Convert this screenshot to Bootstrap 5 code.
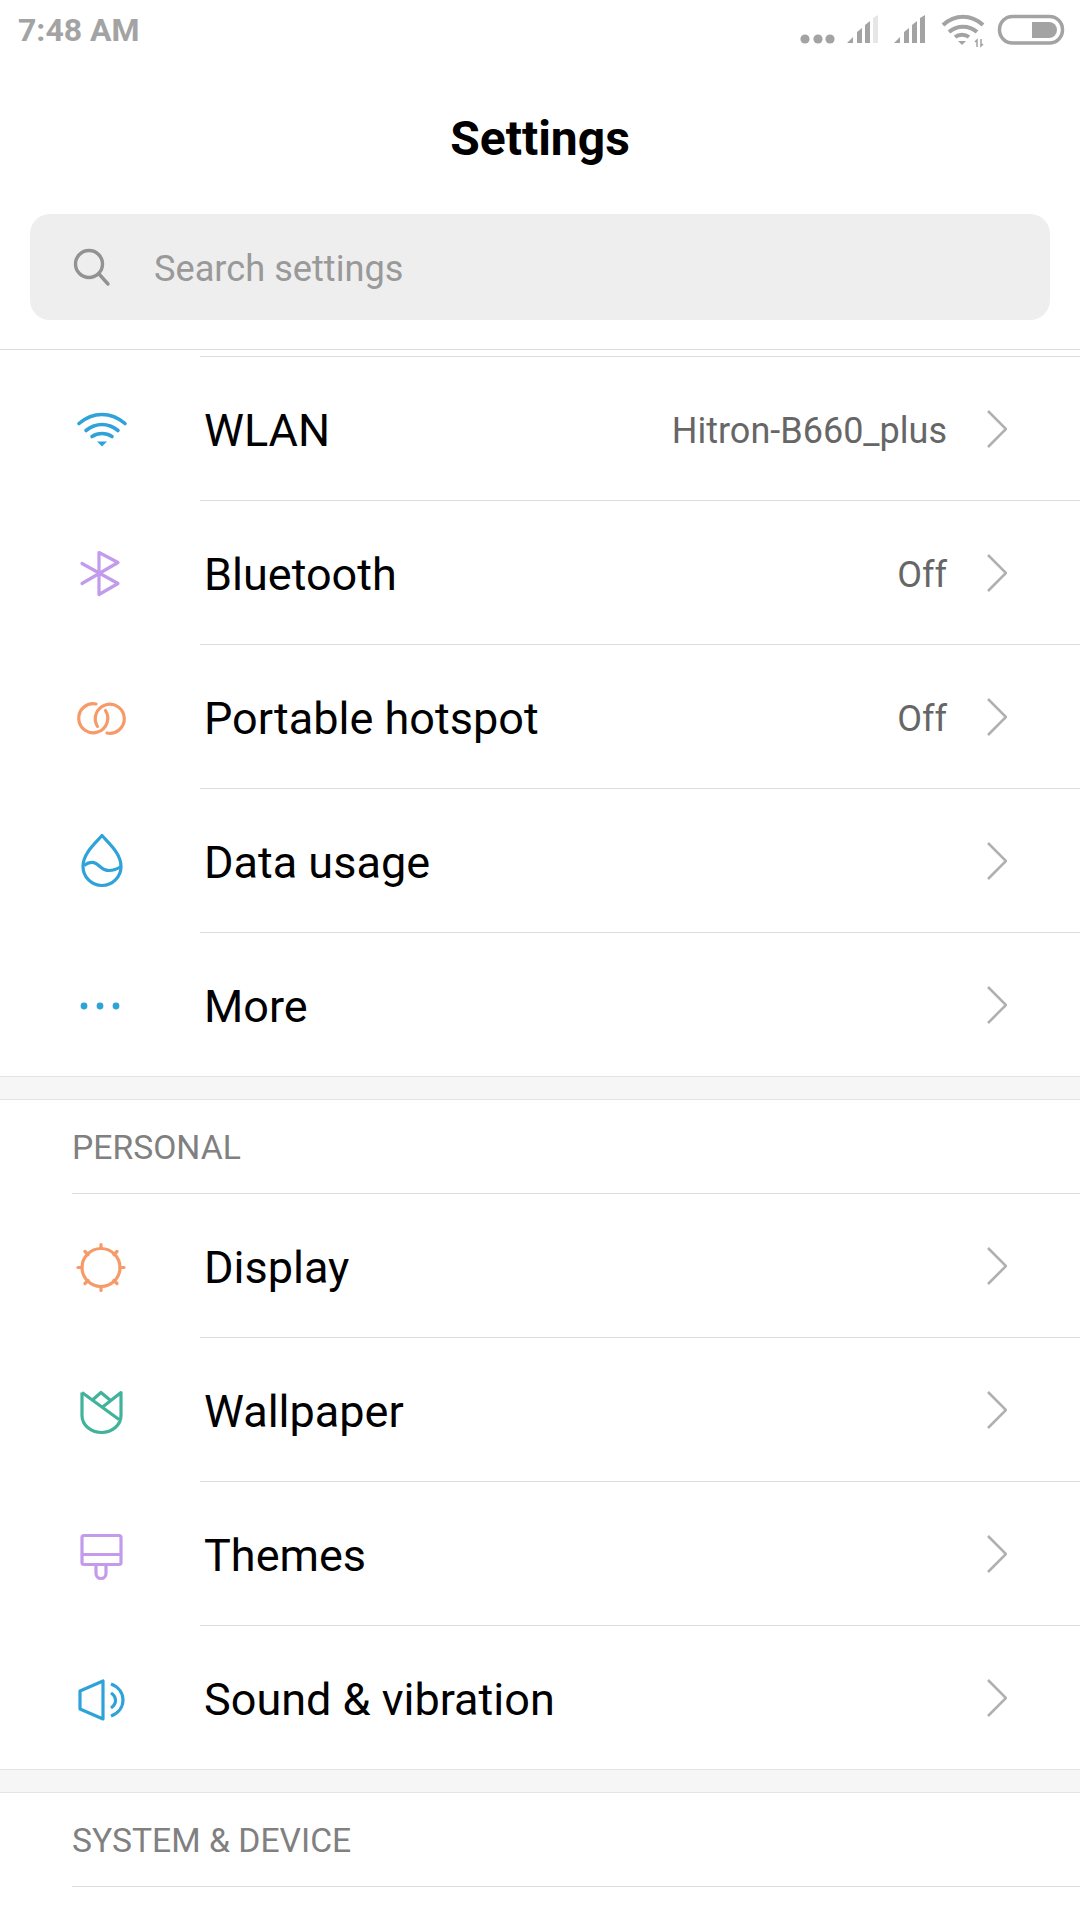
<!DOCTYPE html>
<html lang="en">
  <head>
    <meta charset="UTF-8" />
    <meta name="viewport" content="width=device-width, initial-scale=1.0" />
    <title>Settings</title>
    <link
      href="https://cdn.jsdelivr.net/npm/bootstrap@5.3.2/dist/css/bootstrap.min.css"
      rel="stylesheet"
    />
    <style>
      body {
        font-family: Roboto, "Liberation Sans", sans-serif;
        background: #fff;
        color: #000;
        width: 1080px;
        height: 1920px;
        overflow: hidden;
      }
      svg {
        display: block;
        flex: none;
      }
      .phone-status {
        height: 60px;
        padding: 0 14px 0 18px;
      }
      .phone-time {
        font-size: 32px;
        font-weight: 700;
        color: #a3a3a3;
      }
      .page-title {
        height: 154px;
        padding-top: 4px;
        font-size: 48px;
        font-weight: 700;
        line-height: 1;
        margin: 0;
      }
      .search-box {
        height: 106px;
        margin: 0 30px 29px;
        background: #eee;
        border-radius: 20px;
        font-size: 36.2px;
        color: #999;
      }
      .search-box span {
        padding-top: 4px;
      }
      .search-icon {
        margin: 0 42px 0 42px;
      }
      .head-block {
        border-bottom: 1px solid #ddd;
      }
      .top-gap {
        height: 7px;
        margin-left: 200px;
        border-bottom: 1px solid #ddd;
      }
      .set-row {
        height: 144px;
        background: transparent;
        color: #000;
      }
      .row-icon {
        width: 200px;
        padding-left: 72px;
      }
      .row-body {
        height: 100%;
        border-bottom: 1px solid #ddd;
        padding-right: 73px;
      }
      .set-row:last-child {
        height: 143px;
      }
      .set-row:last-child .row-body {
        border-bottom: 0;
      }
      .row-name {
        font-size: 45px;
        padding: 5px 0 0 4px;
      }
      .row-value {
        font-size: 36px;
        color: #666;
        margin-right: 40px;
        padding-top: 5px;
      }
      .group-gap {
        height: 24px;
        background: #f6f6f6;
        border-top: 1px solid #e4e4e4;
        border-bottom: 1px solid #e4e4e4;
      }
      .group-head {
        height: 94px;
        margin-left: 72px;
        padding-top: 4px;
        border-bottom: 1px solid #ddd;
        font-size: 33.7px;
        color: #808080;
      }
    </style>
  </head>
  <body>
    <!-- Header -->
    <div class="head-block">
      <div class="phone-status d-flex align-items-center justify-content-between">
        <span class="phone-time">7:48 AM</span>
        <div class="d-flex align-items-center">
          <svg width="44" height="40" viewBox="796 10 44 40" fill="#a3a3a3">
            <circle cx="805" cy="39" r="4.6" />
            <circle cx="818" cy="39" r="4.6" />
            <circle cx="830" cy="39" r="4.6" />
          </svg>
          <svg width="52" height="40" viewBox="840 10 52 40" fill="#a3a3a3">
            <path d="M847 43l6-6v6zM857 43V32l5-4v15zM865 43V25l5-4v22z" />
            <path d="M873 43V18l5-3v28z" fill="#e6e6e6" />
          </svg>
          <svg width="48" height="40" viewBox="892 10 48 40" fill="#a3a3a3">
            <path d="M894 43l6-6v6zM904 43V32l5-4v15zM912 43V25l5-4v22zM920 43V18l5-3v28z" />
          </svg>
          <svg width="54" height="40" viewBox="940 10 54 40" fill="none" stroke="#a3a3a3" stroke-width="4">
            <path d="M943 25c12-11 28-11 40 0M949 32c8-7 20-7 28 0" />
            <path d="M955 37c4-3 10-3 14 0" />
            <path d="M958 41h8l-4 4z" fill="#a3a3a3" stroke="none" />
            <path d="M977 47v-7l-2 2M981 39v7l2-2" stroke-width="1.5" />
          </svg>
          <svg width="72" height="40" viewBox="994 10 72 40">
            <rect x="999.5" y="16.5" width="63" height="26.5" rx="13" fill="none" stroke="#a3a3a3" stroke-width="3.5" />
            <path d="M1032 22h17a8 8 0 0 1 8 8a8 8 0 0 1-8 8h-17z" fill="#a3a3a3" />
          </svg>
        </div>
      </div>
      <h1 class="page-title d-flex align-items-center justify-content-center">Settings</h1>
      <div class="search-box d-flex align-items-center">
        <svg class="search-icon" width="40" height="40" viewBox="72 248 40 40" fill="none" stroke="#929292" stroke-width="3.4" stroke-linecap="round">
          <circle cx="89" cy="265" r="13.5" />
          <path d="M99 275l9 10" />
        </svg>
        <span>Search settings</span>
      </div>
    </div>
    <!-- End Header -->

    <!-- Network -->
    <div class="top-gap"></div>
    <div class="list-group list-group-flush">
      <div class="set-row list-group-item p-0 border-0 d-flex align-items-center">
        <div class="row-icon">
          <svg width="60" height="60" viewBox="72 398.5 60 60" fill="none" stroke="#2fa3d9" stroke-width="3.6" stroke-linecap="round">
            <path d="M79 423c14-12 32-12 46 0M86 430c10-8 22-8 32 0M92 436c6-4 14-4 20 0" />
            <path d="M97 441h10l-5 5z" fill="#2fa3d9" stroke="none" />
          </svg>
        </div>
        <div class="row-body flex-grow-1 d-flex align-items-center">
          <span class="row-name me-auto">WLAN</span>
          <span class="row-value">Hitron-B660_plus</span>
          <svg width="20" height="38" viewBox="0 0 20 38" fill="none" stroke="#b0b0b0" stroke-width="2.6"><path d="M1 1l18 18L1 37" /></svg>
        </div>
      </div>
      <div class="set-row list-group-item p-0 border-0 d-flex align-items-center">
        <div class="row-icon">
          <svg width="60" height="60" viewBox="72 542.5 60 60" fill="none" stroke="#c39bec" stroke-width="3.2" stroke-linecap="round" stroke-linejoin="round">
            <path d="M82 563l36 20-19 11V552l19 10-36 21" />
          </svg>
        </div>
        <div class="row-body flex-grow-1 d-flex align-items-center">
          <span class="row-name me-auto">Bluetooth</span>
          <span class="row-value">Off</span>
          <svg width="20" height="38" viewBox="0 0 20 38" fill="none" stroke="#b0b0b0" stroke-width="2.6"><path d="M1 1l18 18L1 37" /></svg>
        </div>
      </div>
      <div class="set-row list-group-item p-0 border-0 d-flex align-items-center">
        <div class="row-icon">
          <svg width="60" height="60" viewBox="72 686.5 60 60" fill="none" stroke="#f59a68" stroke-width="3.2" stroke-linecap="round">
            <path d="M96 703.5A14.5 14.5 0 1 0 105.5 710" />
            <path d="M107 732.5A14.5 14.5 0 1 0 97.5 726" />
          </svg>
        </div>
        <div class="row-body flex-grow-1 d-flex align-items-center">
          <span class="row-name me-auto">Portable hotspot</span>
          <span class="row-value">Off</span>
          <svg width="20" height="38" viewBox="0 0 20 38" fill="none" stroke="#b0b0b0" stroke-width="2.6"><path d="M1 1l18 18L1 37" /></svg>
        </div>
      </div>
      <div class="set-row list-group-item p-0 border-0 d-flex align-items-center">
        <div class="row-icon">
          <svg width="60" height="60" viewBox="72 830.5 60 60" fill="none" stroke="#2fa3d9" stroke-width="3.2" stroke-linejoin="round">
            <path d="M102 835C95 843 83 853 83 866a19 19 0 0 0 38 0C121 853 109 843 102 835z" />
            <path d="M84 865c4-3 8-4 12-2s6 7 13 7c5 0 9-2 12-4" />
          </svg>
        </div>
        <div class="row-body flex-grow-1 d-flex align-items-center">
          <span class="row-name me-auto">Data usage</span>
          <svg width="20" height="38" viewBox="0 0 20 38" fill="none" stroke="#b0b0b0" stroke-width="2.6"><path d="M1 1l18 18L1 37" /></svg>
        </div>
      </div>
      <div class="set-row list-group-item p-0 border-0 d-flex align-items-center">
        <div class="row-icon">
          <svg width="60" height="60" viewBox="72 974 60 60" fill="#2fa3d9">
            <circle cx="84" cy="1005" r="3.4" />
            <circle cx="100" cy="1005" r="3.4" />
            <circle cx="116" cy="1005" r="3.4" />
          </svg>
        </div>
        <div class="row-body flex-grow-1 d-flex align-items-center">
          <span class="row-name me-auto">More</span>
          <svg width="20" height="38" viewBox="0 0 20 38" fill="none" stroke="#b0b0b0" stroke-width="2.6"><path d="M1 1l18 18L1 37" /></svg>
        </div>
      </div>
    </div>
    <div class="group-gap"></div>

    <!-- Personal -->
    <div class="group-head d-flex align-items-center">PERSONAL</div>
    <div class="list-group list-group-flush">
      <div class="set-row list-group-item p-0 border-0 d-flex align-items-center">
        <div class="row-icon">
          <svg width="60" height="60" viewBox="72 1235.5 60 60" fill="none" stroke="#f59a68" stroke-width="3.2" stroke-linecap="round">
            <circle cx="101" cy="1267" r="19" />
            <path d="M101 1244v4M101 1286v4M78 1267h4M120 1267h4M85 1251l3 3M114 1280l3 3M85 1283l3-3M114 1254l3-3" />
          </svg>
        </div>
        <div class="row-body flex-grow-1 d-flex align-items-center">
          <span class="row-name me-auto">Display</span>
          <svg width="20" height="38" viewBox="0 0 20 38" fill="none" stroke="#b0b0b0" stroke-width="2.6"><path d="M1 1l18 18L1 37" /></svg>
        </div>
      </div>
      <div class="set-row list-group-item p-0 border-0 d-flex align-items-center">
        <div class="row-icon">
          <svg width="60" height="60" viewBox="72 1379.5 60 60" fill="none" stroke="#41b39a" stroke-width="3.2" stroke-linejoin="round">
            <path d="M82 1392v23a19.5 17 0 0 0 39 0v-23l-19 15" />
            <path d="M82 1392l37 27M93 1399l8-7 9 7.5" />
          </svg>
        </div>
        <div class="row-body flex-grow-1 d-flex align-items-center">
          <span class="row-name me-auto">Wallpaper</span>
          <svg width="20" height="38" viewBox="0 0 20 38" fill="none" stroke="#b0b0b0" stroke-width="2.6"><path d="M1 1l18 18L1 37" /></svg>
        </div>
      </div>
      <div class="set-row list-group-item p-0 border-0 d-flex align-items-center">
        <div class="row-icon">
          <svg width="60" height="60" viewBox="72 1523.5 60 60" fill="none" stroke="#c39bec" stroke-width="3.2" stroke-linejoin="round">
            <path d="M84 1535h35a2 2 0 0 1 2 2v25a2 2 0 0 1-2 2H84a2 2 0 0 1-2-2v-25a2 2 0 0 1 2-2z" />
            <path d="M82 1554h39M96 1564v9a5 5 0 0 0 10 0v-9" />
          </svg>
        </div>
        <div class="row-body flex-grow-1 d-flex align-items-center">
          <span class="row-name me-auto">Themes</span>
          <svg width="20" height="38" viewBox="0 0 20 38" fill="none" stroke="#b0b0b0" stroke-width="2.6"><path d="M1 1l18 18L1 37" /></svg>
        </div>
      </div>
      <div class="set-row list-group-item p-0 border-0 d-flex align-items-center">
        <div class="row-icon">
          <svg width="60" height="60" viewBox="72 1667 60 60" fill="none" stroke="#2fa3d9" stroke-width="3.2" stroke-linejoin="round">
            <path d="M80 1690l23-10v38l-23-10z" />
            <path d="M111 1692c6 4 6 11 0 15M111 1683c16 6 16 26 0 32" />
          </svg>
        </div>
        <div class="row-body flex-grow-1 d-flex align-items-center">
          <span class="row-name me-auto">Sound &amp; vibration</span>
          <svg width="20" height="38" viewBox="0 0 20 38" fill="none" stroke="#b0b0b0" stroke-width="2.6"><path d="M1 1l18 18L1 37" /></svg>
        </div>
      </div>
    </div>
    <div class="group-gap"></div>

    <!-- System -->
    <div class="group-head d-flex align-items-center">SYSTEM &amp; DEVICE</div>

    <script src="https://cdn.jsdelivr.net/npm/bootstrap@5.3.2/dist/js/bootstrap.bundle.min.js"></script>
  </body>
</html>
